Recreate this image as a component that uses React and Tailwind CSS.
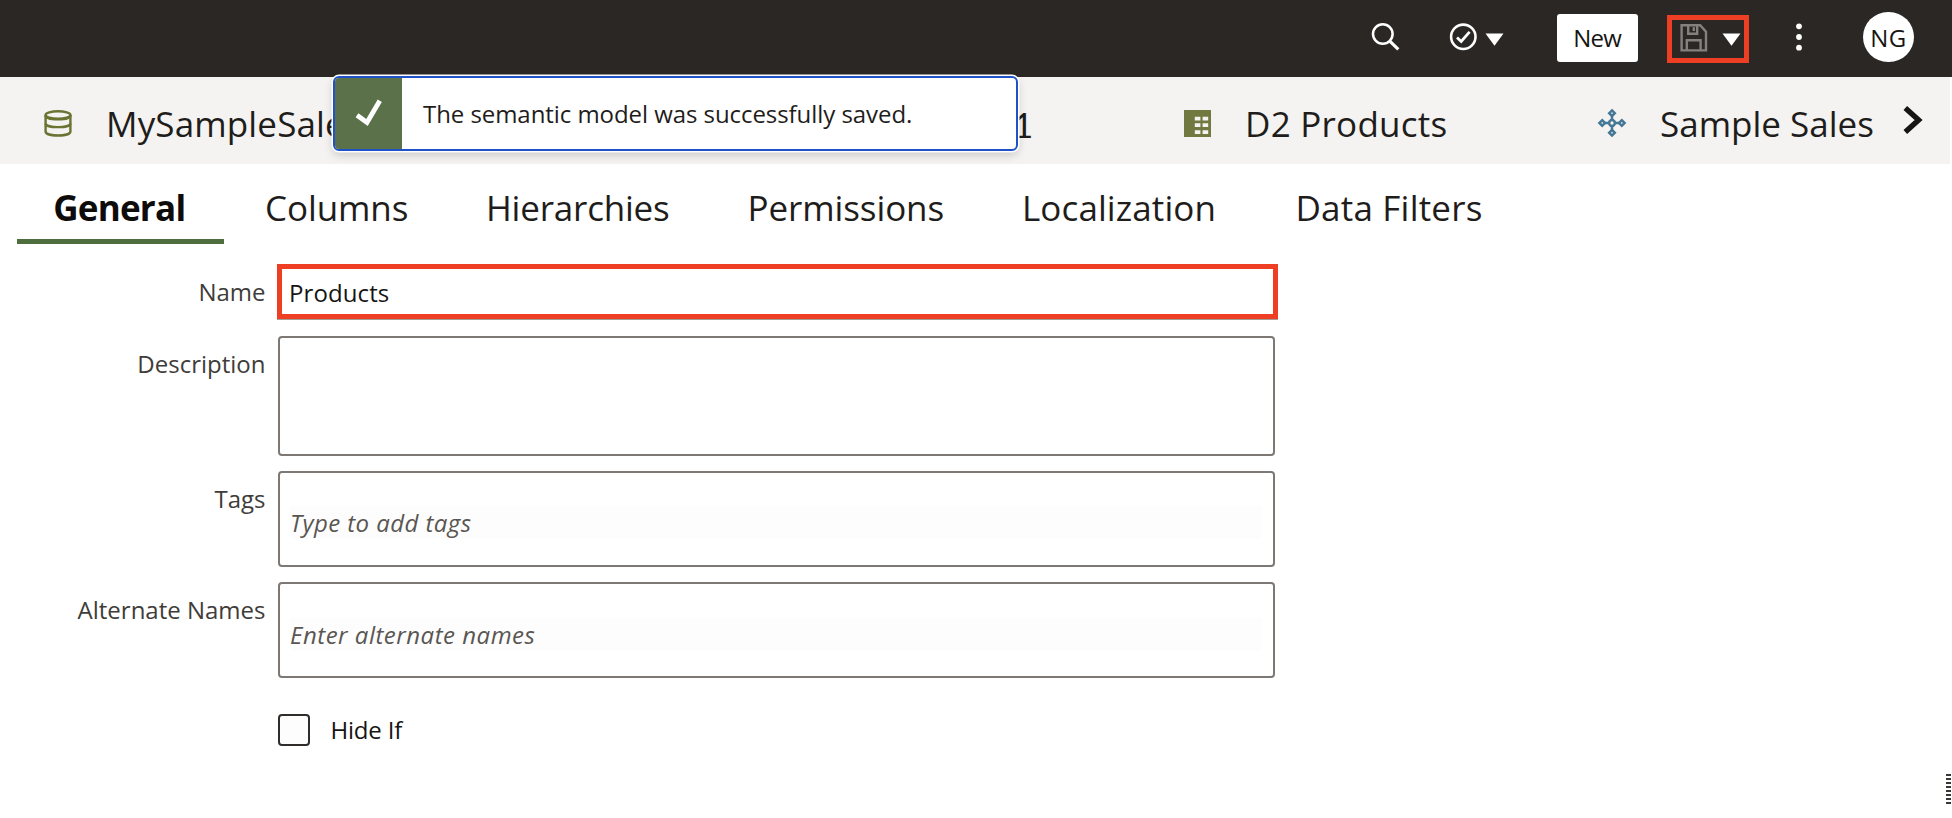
function Caret() {
  return (
    <svg className="block h-[13px] w-[19px]" viewBox="0 0 19 13">
      <path d="M0.5 0.5H18.5L9.5 12.8Z" fill="#fff" />
    </svg>
  );
}

function Header() {
  return (
    <header className="flex h-[77px] items-start bg-[#2b2724] pl-[1371px]">
      <svg className="mt-[22px] h-[29px] w-[30px] shrink-0" viewBox="0 0 30 29" fill="none" stroke="#fff" strokeWidth="2.5">
        <circle cx="11.8" cy="12" r="9.8" />
        <path d="M18.8 19.2L27.3 27.4" strokeWidth="3.2" />
      </svg>
      <svg className="ml-[48px] mt-[22px] h-[29px] w-[29px] shrink-0" viewBox="0 0 29 29" fill="none" stroke="#fff">
        <circle cx="14.3" cy="14.8" r="12.2" strokeWidth="2.6" />
        <path d="M8 15.4L12.2 19.4L20.6 9.8" strokeWidth="2.8" />
      </svg>
      <div className="ml-[7px] mt-[32.5px] shrink-0">
        <Caret />
      </div>
      <button className="ml-[53px] mt-[14px] h-[47.5px] w-[80.5px] shrink-0 rounded-[3px] bg-white text-center text-[24px] leading-[48px] tracking-[-0.7px] text-[#161513]">
        New
      </button>
      <div className="ml-[29px] mt-[14.5px] flex h-[48px] w-[82px] shrink-0 items-start border-[5px] border-[#ee3f24]">
        <svg className="ml-[8px] mt-[4px] h-[28px] w-[28px] shrink-0" viewBox="0 0 28 28" fill="none" stroke="#84807d" strokeWidth="2.4">
          <path d="M1.6 1.3H20.2L26 7.8V26.4H1.6Z" />
          <path d="M8.2 1.3V9.8H17.2V1.3M6.8 26.4V16.2H20.6V26.4" />
          <path d="M13.8 3.2V7" />
        </svg>
        <div className="ml-[14px] mt-[13px] shrink-0">
          <Caret />
        </div>
      </div>
      <svg className="ml-[46.5px] mt-[22px] h-[30px] w-[8px] shrink-0" viewBox="0 0 8 30" fill="#fff">
        <circle cx="4" cy="4.3" r="2.9" />
        <circle cx="4" cy="15" r="2.9" />
        <circle cx="4" cy="25.7" r="2.9" />
      </svg>
      <div className="ml-[60px] mt-[12px] h-[50px] w-[51px] shrink-0 rounded-full bg-white text-center text-[24px] leading-[51px] tracking-[0.6px] text-[#161513]">
        NG
      </div>
    </header>
  );
}

function DatabaseIcon() {
  return (
    <svg className="h-[27px] w-[28px] shrink-0" viewBox="0 0 28 27" fill="none" stroke="#6b7232" strokeWidth="2.4">
      <ellipse cx="14" cy="5" rx="12.4" ry="3.7" />
      <path d="M1.6 5V21.4C1.6 26.9 26.4 26.9 26.4 21.4V5" />
      <path d="M1.6 13.4C1.6 18.4 26.4 18.4 26.4 13.4" />
      <path d="M1.6 5.4C1.6 10.6 26.4 10.6 26.4 5.4" />
    </svg>
  );
}

function TableIcon() {
  return (
    <svg className="h-[27px] w-[27px] shrink-0" viewBox="0 0 27 27">
      <path d="M0 0H27V27H0Z" fill="#717840" />
      <path d="M10.8 6.8H16.4V10.4H10.8ZM18.6 6.8H24.2V10.4H18.6ZM10.8 13.3H16.4V16.9H10.8ZM18.6 13.3H24.2V16.9H18.6ZM10.8 20.2H16.4V24H10.8ZM18.6 20.2H24.2V24H18.6Z" fill="#f4f3f1" />
    </svg>
  );
}

function ModelIcon() {
  return (
    <svg className="h-[30px] w-[30px] shrink-0" viewBox="0 0 30 30" fill="none" stroke="#457796" strokeWidth="2.5">
      <circle cx="15" cy="15" r="2.9" />
      <path d="M15 2.4L17.8 5.2L15 8L12.2 5.2ZM15 22L17.8 24.8L15 27.6L12.2 24.8ZM5.2 12.2L8 15L5.2 17.8L2.4 15ZM24.8 12.2L27.6 15L24.8 17.8L22 15Z" />
      <path d="M15 8V12M15 18V22M8 15H12M18 15H22" />
    </svg>
  );
}

function OpenTabs() {
  return (
    <nav className="flex h-[86.5px] w-[1950px] items-center whitespace-nowrap bg-[#f4f3f1] pl-[43.5px] pt-[6px] text-[35px] leading-[48px] text-[#1f1d1b]">
      <DatabaseIcon />
      <span className="ml-[34.5px] w-[907px] shrink-0 pt-[2px] tracking-[0.15px]">MySampleSale</span>
      <span className="w-[170.5px] shrink-0 pt-[2px] font-['Lato',sans-serif]">1</span>
      <TableIcon />
      <span className="ml-[34.5px] w-[351.5px] shrink-0 pt-[2px] tracking-[0.25px]">D2 Products</span>
      <ModelIcon />
      <span className="ml-[33.5px] shrink-0 pt-[2px]">Sample Sales</span>
      <svg className="mb-[7px] ml-[29.5px] h-[28px] w-[20px] shrink-0" viewBox="0 0 20 28" fill="none" stroke="#161513" strokeWidth="5.4">
        <path d="M2.3 2L15.6 14L2.3 26" />
      </svg>
    </nav>
  );
}

function Sections() {
  return (
    <nav className="flex h-[80.5px] items-start whitespace-nowrap pl-[16.5px] text-[35px] leading-[48px] text-[#1f1d1b]">
      <div className="h-[80.5px] w-[207.5px] shrink-0 border-b-[5px] border-[#4f6e3d] pr-[2px] pt-[20.5px] text-center font-bold tracking-[-0.75px] text-[#0d0c0b]">
        General
      </div>
      <span className="ml-[41px] w-[221px] shrink-0 pt-[20.5px] tracking-[-0.1px]">Columns</span>
      <span className="w-[261.5px] shrink-0 pt-[20.5px] tracking-[-0.2px]">Hierarchies</span>
      <span className="w-[274.5px] shrink-0 pt-[20.5px] tracking-[-0.1px]">Permissions</span>
      <span className="w-[273.5px] shrink-0 pt-[20.5px] tracking-[0.1px]">Localization</span>
      <span className="shrink-0 pt-[20.5px] tracking-[0.2px]">Data Filters</span>
    </nav>
  );
}

function Row({ label, children, className = "" }) {
  return (
    <div className={"flex items-start " + className}>
      <div className="h-[55px] w-[265.5px] shrink-0 text-right leading-[56px] text-[#403c39]">{label}</div>
      {children}
    </div>
  );
}

function General() {
  return (
    <main className="whitespace-nowrap pt-[19.5px] text-[24px]">
      <Row label="Name">
        <div className="ml-[11px] h-[55.5px] w-[1001px] border-[5px] border-[#ee3f24] pl-[7.5px] leading-[47px] tracking-[0.1px] text-[#161513] shadow-[0_1px_0_0_#a39d98]">
          Products
        </div>
      </Row>
      <Row label="Description" className="mt-[16.5px]">
        <div className="ml-[12px] h-[120px] w-[997px] rounded-[4px] border-2 border-[#7d7873]" />
      </Row>
      <Row label="Tags" className="mt-[15px]">
        <div className="ml-[12px] h-[96px] w-[997px] rounded-[4px] border-2 border-[#7d7873] px-[10.5px] pt-[33px]">
          <div className="bg-[#fdfdfd] italic leading-[33px] tracking-[0.43px] text-[#5a5653]">Type to add tags</div>
        </div>
      </Row>
      <Row label="Alternate Names" className="mt-[15.5px]">
        <div className="ml-[12px] h-[96px] w-[997px] rounded-[4px] border-2 border-[#7d7873] px-[10.5px] pt-[34px]">
          <div className="bg-[#fdfdfd] italic leading-[33px] tracking-[0.5px] text-[#5a5653]">Enter alternate names</div>
        </div>
      </Row>
      <label className="ml-[277.5px] mt-[35.5px] flex h-[32px] items-center">
        <span className="block h-[32px] w-[32px] rounded-[4px] border-2 border-[#2f2c2a] bg-[#fdfdfd]" />
        <span className="ml-[21px] leading-[32px] tracking-[-0.2px] text-[#161513]">Hide If</span>
      </label>
    </main>
  );
}

function Toast() {
  return (
    <div className="absolute left-[332.5px] top-[75.5px] flex h-[75.5px] w-[685px] overflow-hidden rounded-[6px] border-2 border-[#1f51c9] bg-white shadow-[0_0_0_1.5px_#fff,0_4px_10px_rgba(0,0,0,0.18)]">
      <div className="flex w-[67.5px] shrink-0 items-center justify-center bg-[#5a714a]">
        <svg className="ml-[2px] h-[28px] w-[28px]" viewBox="0 0 28 28" fill="none" stroke="#fff" strokeWidth="4.8">
          <path d="M2 16.3L12 23.5L24.8 1.8" />
        </svg>
      </div>
      <p className="whitespace-nowrap pl-[21px] text-[24px] leading-[72px] tracking-[-0.06px] text-[#1f1d1b]">
        The semantic model was successfully saved.
      </p>
    </div>
  );
}

function ResizeGrip() {
  return (
    <div className="absolute right-[1px] top-[773.5px] flex flex-col gap-[2px]">
      {[0, 1, 2, 3, 4, 5, 6, 7].map((n) => (
        <div key={n} className="h-[2px] w-[5px] bg-[#3a3735]" />
      ))}
    </div>
  );
}

export default function App() {
  return (
    <div className="relative h-[818px] w-[1952px] overflow-hidden bg-white font-['Open_Sans','Noto_Sans',sans-serif]">
      <Header />
      <OpenTabs />
      <Sections />
      <General />
      <Toast />
      <ResizeGrip />
    </div>
  );
}
